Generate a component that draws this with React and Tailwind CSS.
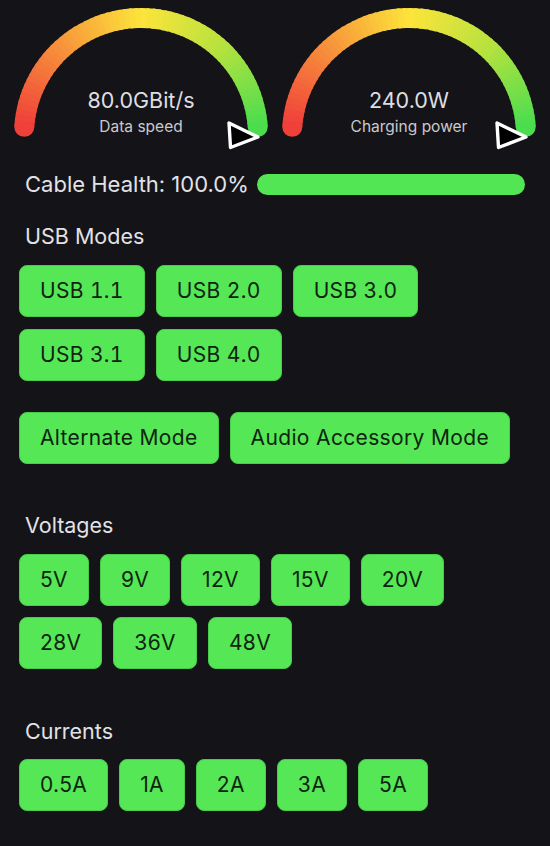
import React from 'react';

const stops = [
    [0, [239, 64, 58]],
    [0.25, [247, 146, 59]],
    [0.5, [253, 228, 59]],
    [0.75, [182, 226, 62]],
    [1, [76, 221, 78]],
];

const colorAt = (t) => {
    for (let i = 1; i < stops.length; i++) {
        const [t1, c1] = stops[i];
        const [t0, c0] = stops[i - 1];
        if (t <= t1) {
            const k = (t - t0) / (t1 - t0);
            const c = c0.map((v, j) => Math.round(v + (c1[j] - v) * k));
            return `rgb(${c[0]},${c[1]},${c[2]})`;
        }
    }
    return 'rgb(76,221,78)';
};

const cx = 134;
const cy = 135;
const r = 117;
const startDeg = 184;
const endDeg = 356;

const point = (deg) => {
    const a = (deg * Math.PI) / 180;
    return [cx + r * Math.cos(a), cy + r * Math.sin(a)];
};

function Gauge({value, label}) {
    const n = 64;
    const segs = [];
    for (let i = 0; i < n; i++) {
        const a0 = startDeg + ((endDeg - startDeg) * i) / n;
        const a1 = startDeg + ((endDeg - startDeg) * (i + 1.4)) / n;
        const [x0, y0] = point(a0);
        const [x1, y1] = point(Math.min(a1, endDeg));
        segs.push(
            <path key={i} d={`M ${x0} ${y0} A ${r} ${r} 0 0 1 ${x1} ${y1}`} stroke={colorAt(i / (n - 1))}
                  strokeWidth="20" fill="none"/>
        );
    }
    const [sx, sy] = point(startDeg);
    const [ex, ey] = point(endDeg);

    return (
        <svg width="268" height="170" viewBox="0 0 268 170">
            <circle cx={sx} cy={sy} r="10" fill={colorAt(0)}/>
            <circle cx={ex} cy={ey} r="10" fill={colorAt(1)}/>
            {segs}
            <text x="134" y="108" textAnchor="middle" fill="#dedee2" fontSize="21.5"
                  fontFamily="Inter, 'Noto Sans', sans-serif">{value}</text>
            <text x="134" y="132" textAnchor="middle" fill="#c9c9ce" fontSize="15.5"
                  fontFamily="Inter, 'Noto Sans', sans-serif">{label}</text>
            <path d="M 222 123 L 223.5 147.5 L 251 137 Z" fill="#000" stroke="#fff" strokeWidth="3.4"
                  strokeLinejoin="round"/>
        </svg>
    );
}

function Chip({children}) {
    return (
        <div className="h-[52px] px-[20px] flex items-center justify-center rounded-[8px] bg-[#55e756] border border-[#48cc4a] text-[#0f240f] text-[21px] tracking-[0.35px]">
            {children}
        </div>
    );
}

function Row({items, className = ''}) {
    return (
        <div className={`flex gap-[11px] ${className}`}>
            {items.map(item => <Chip key={item}>{item}</Chip>)}
        </div>
    );
}

function Label({children, className}) {
    return <div className={`pl-[6px] text-[21.5px] leading-[28px] text-[#e2e2e6] ${className}`}>{children}</div>;
}

export default function App() {
    return (
        <div className="min-h-screen bg-[#141418] pb-8" style={{fontFamily: "Inter, 'Noto Sans', sans-serif"}}>
            <div className="flex justify-center">
                <Gauge value="80.0GBit/s" label="Data speed"/>
                <Gauge value="240.0W" label="Charging power"/>
            </div>
            <div className="px-[19px]">
                <div className="flex items-center gap-2 h-[28px] px-[6px]">
                    <span className="text-[22px] text-[#e2e2e6] whitespace-nowrap">Cable Health: 100.0%</span>
                    <div className="flex-1 h-[21px] rounded-full bg-[#53e654]"/>
                </div>

                <Label className="mt-[24px]">USB Modes</Label>
                <div className="mt-[15px] flex flex-col gap-[12px] tabular-nums">
                    <Row items={['USB 1.1', 'USB 2.0', 'USB 3.0']}/>
                    <Row items={['USB 3.1', 'USB 4.0']}/>
                </div>
                <div className="mt-[31px]">
                    <Row items={['Alternate Mode', 'Audio Accessory Mode']}/>
                </div>

                <Label className="mt-[47px]">Voltages</Label>
                <div className="mt-[15px] flex flex-col gap-[11px]">
                    <Row items={['5V', '9V', '12V', '15V', '20V']}/>
                    <Row items={['28V', '36V', '48V']}/>
                </div>

                <Label className="mt-[48px]">Currents</Label>
                <div className="mt-[14px]">
                    <Row items={['0.5A', '1A', '2A', '3A', '5A']}/>
                </div>
            </div>
        </div>
    );
}
